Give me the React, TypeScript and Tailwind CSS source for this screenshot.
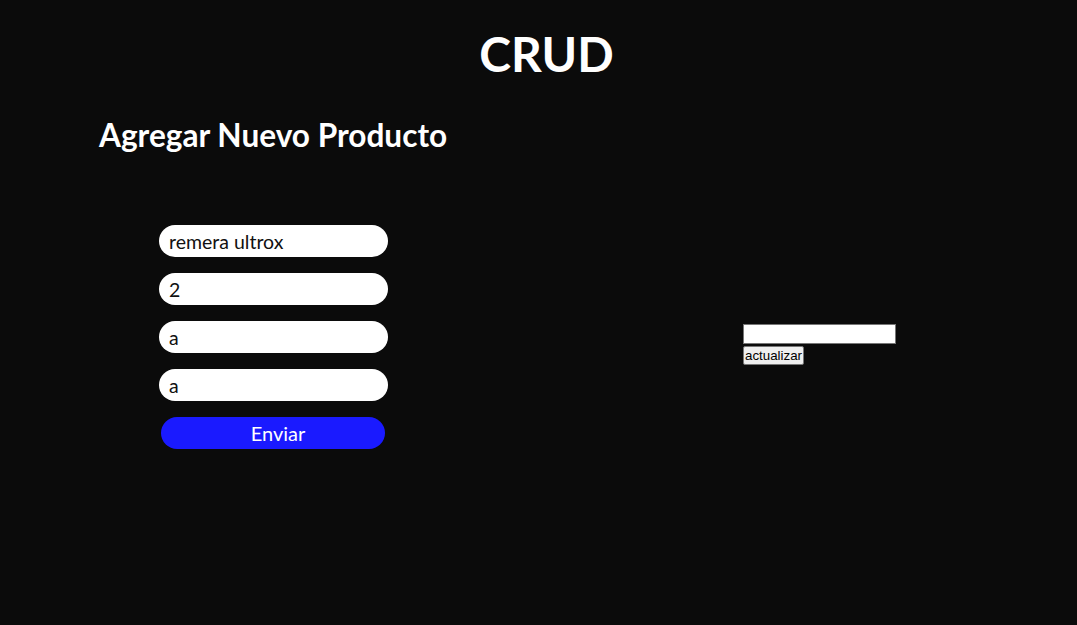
export default function App() {
  return (
    <div className="min-h-[625px] w-full bg-[#0b0b0b] font-['Lato',sans-serif] text-white">
      <h1 className="pl-[16px] pt-[25px] text-center text-[48px] font-bold leading-[58px]">CRUD</h1>

      <div className="flex">
        {/* Formulario */}
        <section className="w-[650px] pl-[99px] pt-[33px]">
          <h2 className="text-[31.6px] font-bold leading-[38px]">Agregar Nuevo Producto</h2>
          <form className="mt-[71px] ml-[60px] flex w-[229px] flex-col gap-4">
            <input
              defaultValue="remera ultrox"
              className="h-8 w-[229px] rounded-full bg-white px-[10px] text-[19.5px] text-[#111] outline-none"
            />
            <input
              defaultValue="2"
              className="h-8 w-[229px] rounded-full bg-white px-[10px] text-[19.5px] text-[#111] outline-none"
            />
            <input
              defaultValue="a"
              className="h-8 w-[229px] rounded-full bg-white px-[10px] text-[19.5px] text-[#111] outline-none"
            />
            <input
              defaultValue="a"
              className="h-8 w-[229px] rounded-full bg-white px-[10px] text-[19.5px] text-[#111] outline-none"
            />
            <button
              type="button"
              className="ml-[2px] h-8 w-[224px] rounded-full bg-[#1a1aff] pl-[10px] text-[20px] text-white"
            >
              Enviar
            </button>
          </form>
        </section>

        {/* Actualizar */}
        <section className="ml-[93px] flex flex-col items-start pt-[241px]">
          <input className="h-5 w-[153px] border border-[#767676] bg-white px-[2px] text-[13px] text-black outline-none" />
          <button
            type="button"
            className="mt-[2px] rounded-[2px] border border-[#767676] bg-[#efefef] px-[1px] py-[1px] font-['Liberation_Sans',sans-serif] text-[13.33px] leading-[15px] text-black"
          >
            actualizar
          </button>
        </section>
      </div>
    </div>
  );
}
